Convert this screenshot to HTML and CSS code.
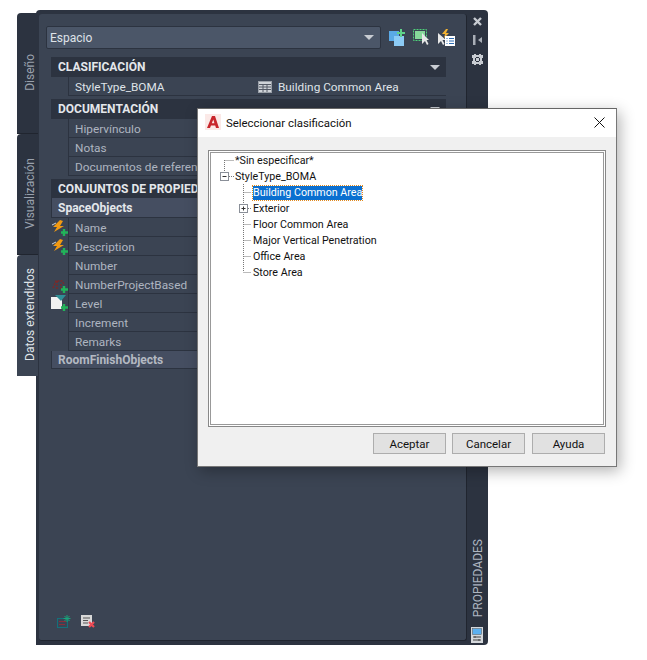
FILE: index.html
```html
<!DOCTYPE html>
<html lang="es">
<head>
<meta charset="utf-8">
<title>Propiedades</title>
<link rel="stylesheet" href="styles.css">
</head>
<body>
<div class="palette">
  <div class="tabs">
    <div class="tab"><span>Diseño</span></div>
    <div class="tab"><span>Visualización</span></div>
    <div class="tab active"><span>Datos extendidos</span></div>
  </div>
  <div class="frame">
    <div class="inner">
      <div class="toolbar">
        <div class="combo"><span>Espacio</span><i class="caret"></i></div>
        <svg class="tool t1" width="17" height="17" viewBox="0 0 17 17"><rect x="0" y="2" width="10" height="10" fill="#5aa9e6"/><rect x="5" y="7" width="10" height="10" fill="#8ccbf5"/><path d="M8 4h8M12 0v8" stroke="#5fd38a" stroke-width="2"/></svg>
        <svg class="tool t2" width="17" height="17" viewBox="0 0 17 17"><rect x=".5" y=".5" width="13" height="11" fill="none" stroke="#4fd17a" stroke-dasharray="2 1"/><rect x="2" y="2" width="10" height="8" fill="#86d79a"/><path d="M9 4v11l3-3 2 4 1.500-1-2-4H16z" fill="#e8e8e8"/></svg>
        <svg class="tool t3" width="17" height="17" viewBox="0 0 17 17"><path d="M0 4v11l3-3 2 4 1.500-1-2-4H8z" fill="#e8e8e8"/><path d="M8 0L4 5h3L6 9l5-5H8l2-4z" fill="#f2b233"/><rect x="7" y="7" width="10" height="10" fill="#fff"/><path d="M8.500 9.500h1M11 9.500h5M8.500 12h1M11 12h5M8.500 14.500h1M11 14.500h5" stroke="#2e6db4"/></svg>
      </div>
      <div class="sections">
        <div class="head first"><span>CLASIFICACIÓN</span><i class="caret small"></i></div>
        <div class="row"><span class="label bright">StyleType_BOMA</span><span class="value"><svg width="14" height="12" viewBox="0 0 14 12"><rect x=".500" y=".500" width="13" height="11" fill="#cfd3d8" stroke="#9aa0a8"/><path d="M1 3.500h12M1 6h12M1 8.500h12M5 3v8M9 3v8" stroke="#555b66"/></svg>Building Common Area</span></div>
        <div class="head"><span>DOCUMENTACIÓN</span><i class="caret small"></i></div>
        <div class="row"><span class="label">Hipervínculo</span></div>
        <div class="row"><span class="label">Notas</span></div>
        <div class="row"><span class="label">Documentos de referencia</span></div>
        <div class="head narrow"><span>CONJUNTOS DE PROPIEDADES</span></div>
        <div class="sub"><span>SpaceObjects</span></div>
        <div class="row"><svg class="mark" width="18" height="18" viewBox="0 0 18 18"><path d="M9 1L2 8h4l-3 5 10-6H9l3-5z" fill="#f29a12"/><path d="M1 6l4-2" stroke="#cfd3d8"/><path d="M13 10v7M10 13.500h7" stroke="#22b35a" stroke-width="2.400"/></svg><span class="label">Name</span></div>
        <div class="row"><svg class="mark" width="18" height="18" viewBox="0 0 18 18"><path d="M9 1L2 8h4l-3 5 10-6H9l3-5z" fill="#f29a12"/><path d="M1 6l4-2" stroke="#cfd3d8"/><path d="M13 10v7M10 13.500h7" stroke="#22b35a" stroke-width="2.400"/></svg><span class="label">Description</span></div>
        <div class="row"><span class="label">Number</span></div>
        <div class="row"><svg class="mark" width="18" height="18" viewBox="0 0 18 18"><path d="M2 12l3-7h6l2 3M6 5v8M10 8v4h4" fill="none" stroke="#7a2a2a" stroke-width="1.500" stroke-dasharray="2 1"/><path d="M13 10v7M10 13.500h7" stroke="#22b35a" stroke-width="2.400"/></svg><span class="label">NumberProjectBased</span></div>
        <div class="row"><svg class="mark level" width="18" height="18" viewBox="0 0 18 18"><rect x="0" y="3" width="11" height="12" fill="#f2f2f2"/><path d="M4 1h11l-5 6z" fill="#2f8f96"/><path d="M13 10v7M10 13.500h7" stroke="#22b35a" stroke-width="2.400"/></svg><span class="label">Level</span></div>
        <div class="row"><span class="label">Increment</span></div>
        <div class="row"><span class="label">Remarks</span></div>
        <div class="sub muted"><span>RoomFinishObjects</span></div>
      </div>
      <div class="footer">
        <svg width="14" height="13" viewBox="0 0 14 13"><rect x=".500" y="3.500" width="10" height="9" fill="#3a4454" stroke="#14707a"/><path d="M2 6.500h7M2 9.500h6" stroke="#8a2f3a"/><path d="M10 0v7M6.500 3.500h7M7.500 1l5 5M12.500 1l-5 5" stroke="#1aa37a"/></svg>
        <svg width="14" height="13" viewBox="0 0 14 13"><rect x="0" y="0" width="11" height="11" fill="#d8d8d8"/><path d="M2 3h7M2 5.500h5M2 8h5" stroke="#555"/><path d="M8 7l5 5M13 7l-5 5" stroke="#ee4b55" stroke-width="2.200"/></svg>
      </div>
    </div>
    <div class="strip">
      <svg class="s1" width="9" height="9" viewBox="0 0 9 9"><path d="M1 1l7 7M8 1l-7 7" stroke="#c8ccd2" stroke-width="2.400"/></svg>
      <svg class="s2" width="9" height="10" viewBox="0 0 9 10"><path d="M0 0h2.500v10H0z M9 2v6L5 5z" fill="#a9aeb6"/></svg>
      <svg class="s3" width="11" height="11" viewBox="0 0 11 11"><path d="M0 1h2V0h2v1h3V0h2v1h2v3h-1v3h1v3H9v1H7v-1H4v1H2v-1H0V7h1V4H0z" fill="#c8ccd2"/><path d="M4 3.500h3M4 7.500h3M3.500 4v3M7.500 4v3" stroke="#2c3340"/></svg>
      <span class="strip-title">PROPIEDADES</span>
      <svg class="strip-icon" width="12" height="16" viewBox="0 0 12 16"><rect width="12" height="16" fill="#d5d8dc"/><rect x="1.500" y="1.500" width="9" height="6" fill="#5cb0f0" stroke="#555"  stroke-width=".5"/><path d="M2 10h8M2 13h8M4 9v2M8 12v2" stroke="#444"/></svg>
    </div>
  </div>
</div>

<div class="dialog">
  <div class="titlebar">
    <svg class="logo" width="16" height="16" viewBox="0 0 16 16"><rect width="16" height="16" fill="#fbe9e7"/><path d="M2 14L7 2h3l4 12h-3l-.8-2.500H6L5 14zM6.800 9.200h2.600L8.300 5.500z" fill="#c8262c"/></svg>
    <span class="title">Seleccionar clasificación</span>
    <svg class="close" width="11" height="11" viewBox="0 0 11 11"><path d="M.5.500l10 10M10.500.500l-10 10" stroke="#111" fill="none"/></svg>
  </div>
  <div class="body">
    <div class="tree">
      <svg class="lines" width="60" height="130" viewBox="0 0 60 130">
        <g stroke="#777" stroke-dasharray="1 1" fill="none">
          <path d="M15.500 9v12M15.500 9.500h10M20 25.500h5M34.500 33v88M34.500 41.500h8M39 57.500h4M34.500 73.500h8M34.500 89.500h8M34.500 105.500h8M34.500 121.500h8"/>
        </g>
        <rect x="11.500" y="21.500" width="8" height="8" fill="#fff" stroke="#8a8f98"/><path d="M13.500 25.500h4" stroke="#333"/>
        <rect x="30.500" y="53.500" width="8" height="8" fill="#fff" stroke="#8a8f98"/><path d="M32.500 57.500h4M34.500 55.500v4" stroke="#333"/>
      </svg>
      <ul class="items">
        <li class="lvl0">*Sin especificar*</li>
        <li class="lvl0">StyleType_BOMA</li>
        <li class="lvl1"><span class="selected">Building Common Area</span></li>
        <li class="lvl1">Exterior</li>
        <li class="lvl1">Floor Common Area</li>
        <li class="lvl1">Major Vertical Penetration</li>
        <li class="lvl1">Office Area</li>
        <li class="lvl1">Store Area</li>
      </ul>
    </div>
    <div class="buttons">
      <button>Aceptar</button>
      <button>Cancelar</button>
      <button>Ayuda</button>
    </div>
  </div>
</div>
</body>
</html>
```
FILE: styles.css
```css
* { box-sizing: border-box; }
html, body { margin: 0; padding: 0; background: #fff; }
body { width: 647px; height: 660px; position: relative; overflow: hidden; font-family: Roboto, "Noto Sans", sans-serif; }

.palette { position: absolute; left: 17px; top: 10px; display: flex; }
.tabs { width: 19px; padding-top: 3px; display: flex; flex-direction: column; }
.tab {
  width: 21px; height: 121px; background: #2c3340; border-radius: 4px 0 0 0; padding: 0 0 2px 5px;
  border-bottom: 1px solid #20252f; display: flex; align-items: center; justify-content: center;
  font-size: 12px; color: #9aa1ad; position: relative; z-index: 1;
}
.tab span { writing-mode: vertical-rl; transform: rotate(180deg); white-space: nowrap; }
.tab.active { background: #3b4453; color: #dfe3e8; border-bottom: 0; }

.frame {
  width: 452px; height: 635px; background: #2c3340; border-radius: 4px 4px 4px 0;
  padding: 4px 0 4px 3px; display: flex;
}
.inner {
  width: 428px; background: #3b4453; border-radius: 3px; padding: 12px 20px 0 7px;
  display: flex; flex-direction: column; border-right: 1px solid #20252f; border-bottom: 1px solid #20252f;
}
.toolbar { display: flex; align-items: center; width: 420px; flex: none; }
.combo {
  width: 335px; height: 23px; background: #4b5668; border: 1px solid #2c3340; border-radius: 2px;
  display: flex; align-items: center; justify-content: space-between; padding: 0 6px 0 3px;
  font-size: 12px; color: #dfe3e8;
}
.tool { flex: none; }
.t1 { margin-left: 8px; }
.t2 { margin-left: 7px; }
.t3 { margin-left: 8px; }
.caret { width: 0; height: 0; border-left: 5px solid transparent; border-right: 5px solid transparent; border-top: 5px solid #c8ccd2; }
.caret.small { margin-right: 6px; }

.sections { margin: 8px 0 0 5px; width: 395px; }
.head {
  height: 20px; background: #2c3340; display: flex; align-items: center; justify-content: space-between;
  padding-left: 7px; font-size: 12px; font-weight: 700; color: #e4e7eb; margin-top: 3px; white-space: nowrap;
}
.head.first { margin-top: 0; }
.head.narrow { height: 19px; }
.sub {
  height: 20px; background: #454e61; border: 1px solid #2c3340; border-width: 0 0 1px 1px;
  padding: 0 0 0 6px; display: flex; align-items: center; font-size: 12px; font-weight: 700; color: #e4e7eb;
}
.sub.muted { color: #b4b9c2; height: 18px; }
.row {
  height: 19px; margin-left: 17px; padding: 2px 0 0 6px; border-left: 1px solid #2c3340; border-bottom: 1px solid #2c3340;
  display: flex; align-items: center; font-size: 11.8px; color: #aeb5c0; position: relative; white-space: nowrap;
}
.label { width: 183px; flex: none; }
.label.bright { color: #dfe3e8; }
.value { display: flex; align-items: center; gap: 6px; color: #dfe3e8; }
.value svg { margin-top: -1px; }
.mark { position: absolute; left: -18px; top: 1px; }
.mark.level { top: 0; }

.footer { margin: auto 0 12px 11px; display: flex; gap: 10px; }

.strip { flex: 1; display: flex; flex-direction: column; align-items: center; padding: 3px 1px 0 0; }
.s2 { margin-top: 9px; }
.s3 { margin-top: 9px; }
.strip-title {
  margin: auto 0 0 2px; writing-mode: vertical-rl; transform: rotate(180deg); font-size: 12px; color: #aeb5c0;
}
.strip-icon { flex: none; margin: 10px 0 -2px; }

.dialog {
  position: absolute; left: 197px; top: 108px; width: 420px; height: 359px; background: #f0f0f0;
  border: 1px solid #777; border-top-color: #666; box-shadow: 3px 4px 14px rgba(0,0,0,.3); display: flex; flex-direction: column;
}
.titlebar { height: 28px; background: #fff; display: flex; align-items: center; padding: 0 11px 0 8px; font-size: 11.4px; color: #111; flex: none; }
.logo { margin-left: -1px; margin-bottom: 2px; }
.close { margin-bottom: 2px; }
.title { margin-left: 5px; flex: 1; }
.body { flex: 1; padding: 13px 11px 0 10px; }
.tree {
  height: 277px; width: 398px; background: #fff; border: 1px solid #888; outline: 1px solid #f0f0f0;
  box-shadow: inset 0 0 0 1px #fff, inset 0 0 0 2px #999; position: relative; padding: 2px 3px;
}
.lines { position: absolute; left: 0; top: 0; }
.items { list-style: none; margin: 0; padding: 0; font-size: 10.7px; color: #111; }
.items li { height: 16px; line-height: 16px; white-space: nowrap; }
.lvl0 { padding-left: 23px; }
.lvl1 { padding-left: 41px; }
.selected { background: #0a6fd0; color: #fff; outline: 1px dotted #e08a20; display: inline-block; height: 14px; line-height: 14px; }
.buttons { display: flex; justify-content: flex-end; gap: 6px; margin-top: 6px; }
.buttons button:last-child { margin-left: 1px; }
button {
  width: 73px; height: 21px; background: #e1e1e1; border: 1px solid #adadad; font: 11.5px Roboto, sans-serif; color: #111; padding: 0;
}
```
